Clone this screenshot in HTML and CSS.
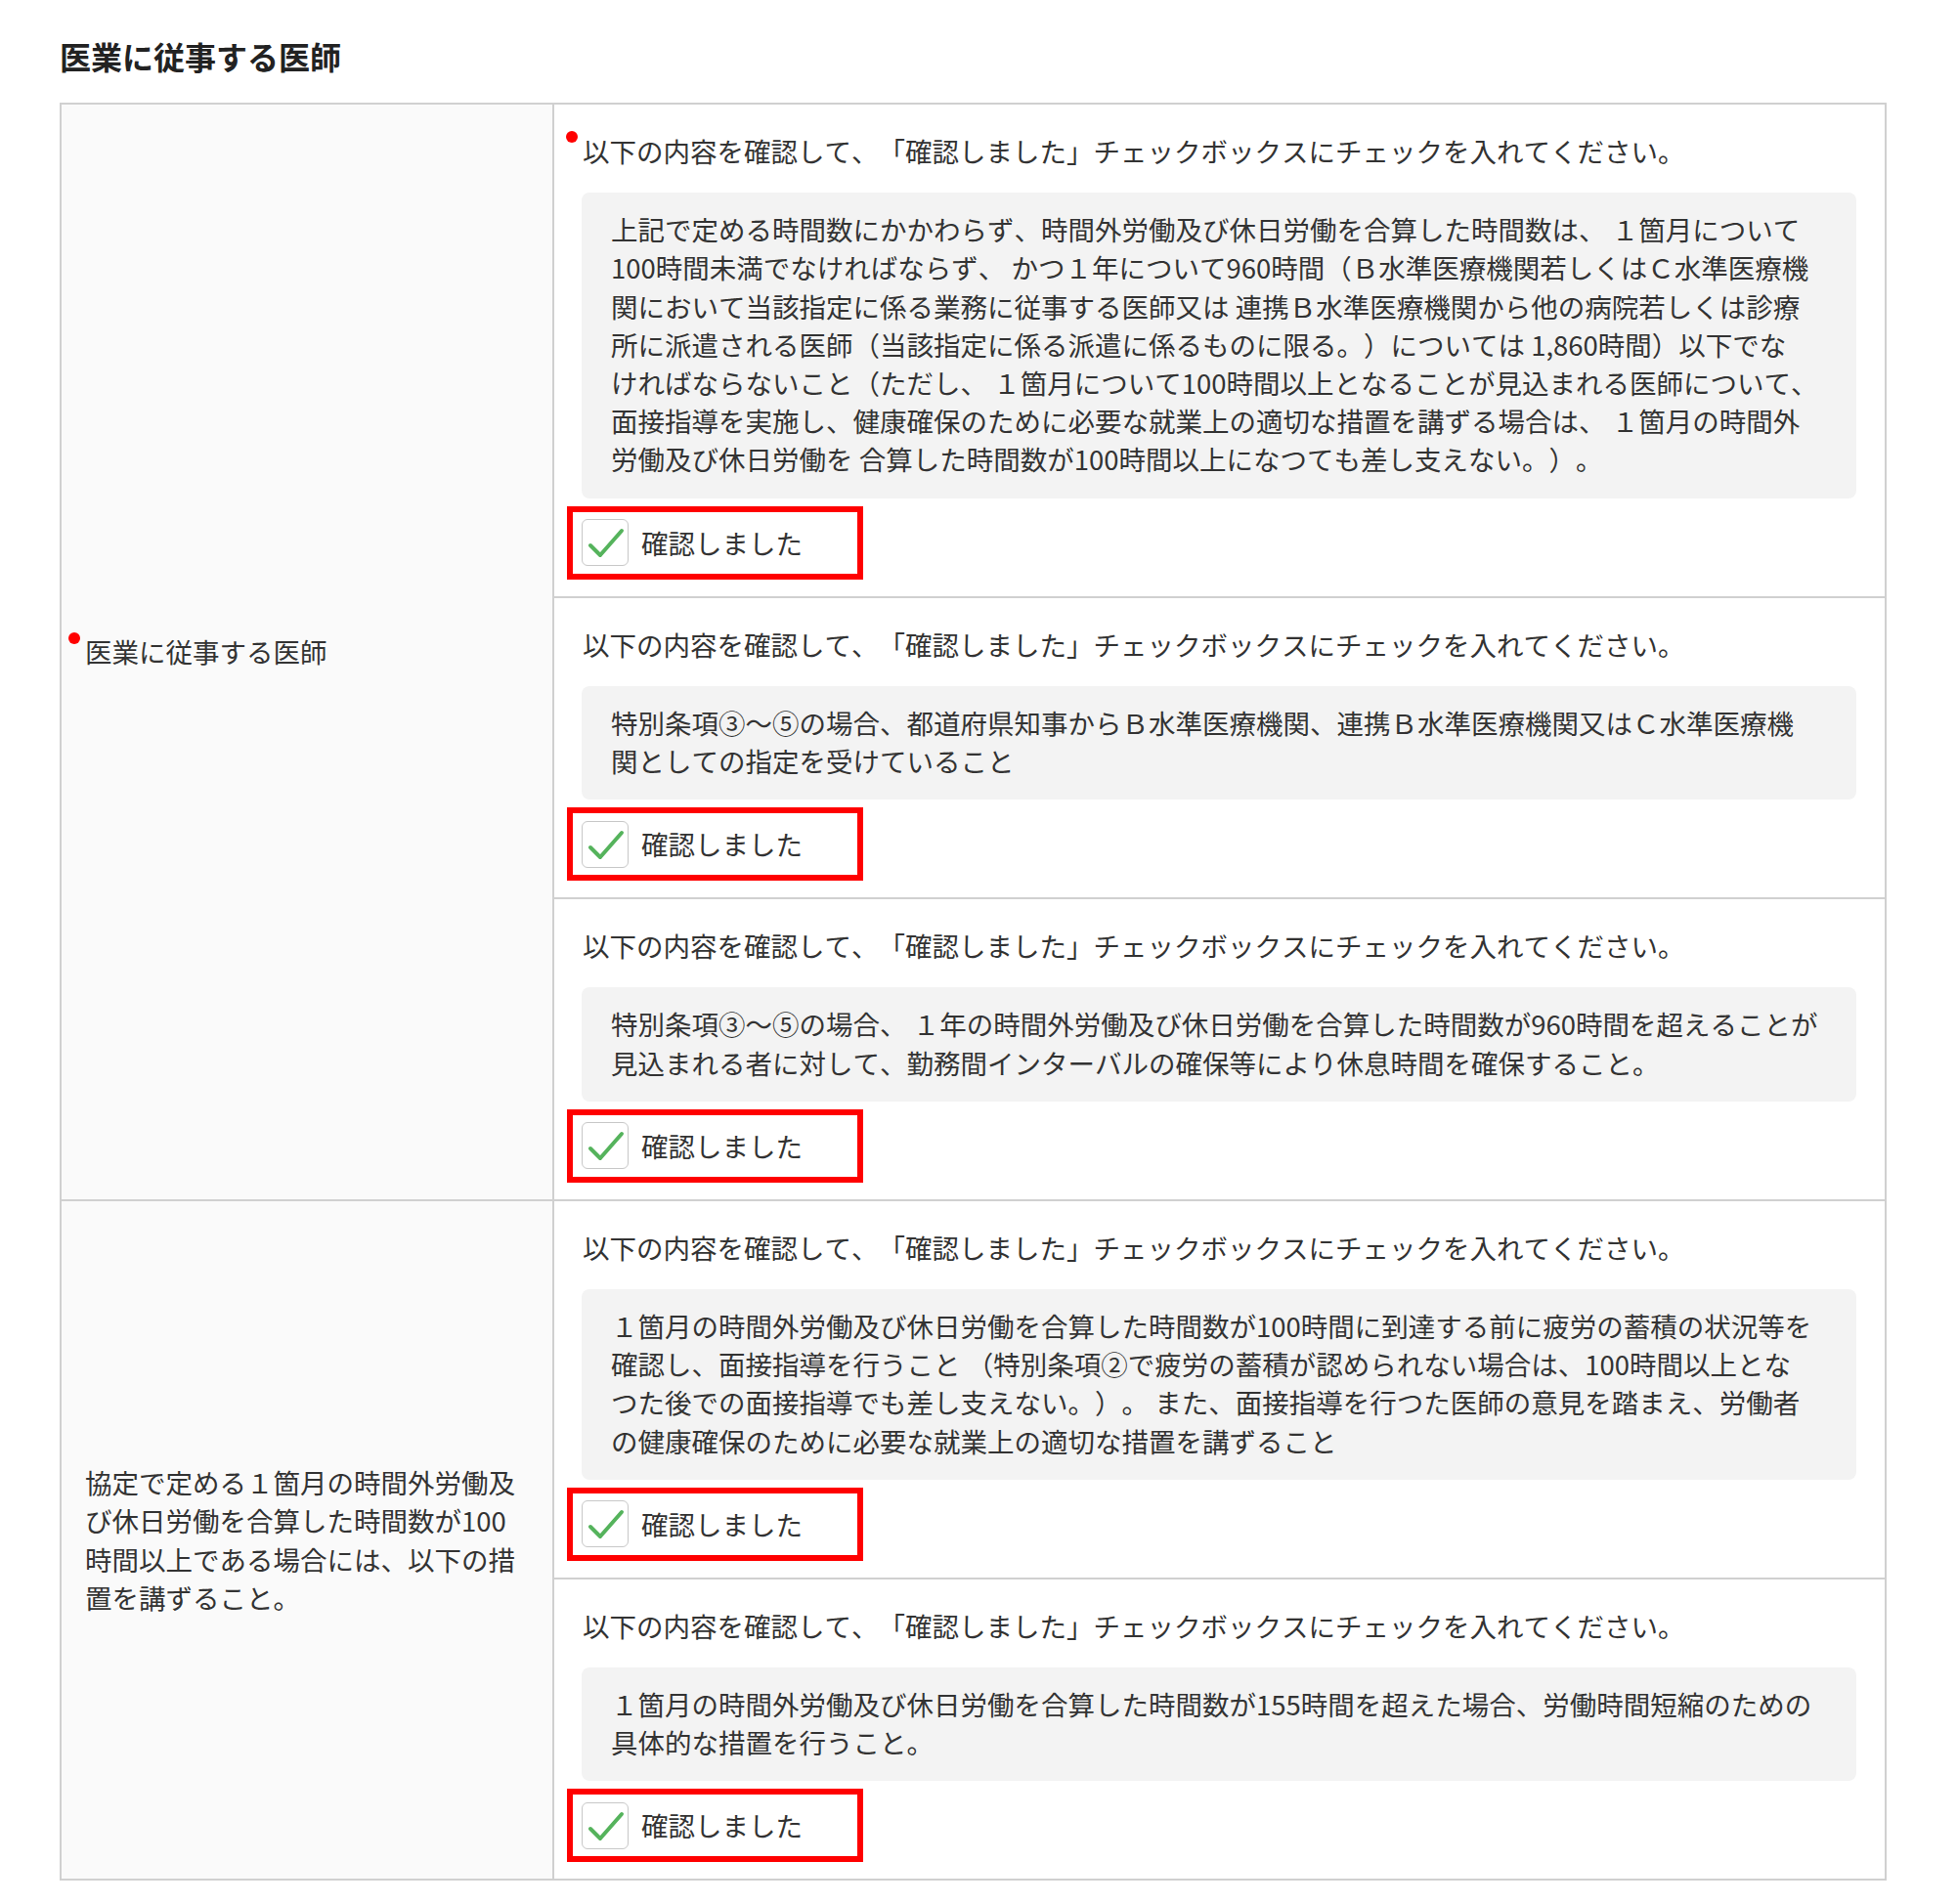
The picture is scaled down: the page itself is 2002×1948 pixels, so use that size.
FILE: index.html
```html
<!DOCTYPE html>
<html lang="ja">
<head>
<meta charset="utf-8">
<title>医業に従事する医師</title>
<link rel="stylesheet" href="styles.css">
</head>
<body>
<div class="page">
  <h2 class="title">医業に従事する医師</h2>
  <div class="table">
    <div class="row">
      <div class="label"><span class="req">医業に従事する医師</span></div>
      <div class="items">
        <div class="item">
          <p class="instr"><span class="req">以下の内容を確認して、「確認しました」チェックボックスにチェックを入れてください。</span></p>
          <div class="note">上記で定める時間数にかかわらず、時間外労働及び休日労働を合算した時間数は、 １箇月について<br>100時間未満でなければならず、 かつ１年について960時間（Ｂ水準医療機関若しくはＣ水準医療機<br>関において当該指定に係る業務に従事する医師又は 連携Ｂ水準医療機関から他の病院若しくは診療<br>所に派遣される医師（当該指定に係る派遣に係るものに限る。）については 1,860時間）以下でな<br>ければならないこと（ただし、 １箇月について100時間以上となることが見込まれる医師について、<br>面接指導を実施し、健康確保のために必要な就業上の適切な措置を講ずる場合は、 １箇月の時間外<br>労働及び休日労働を 合算した時間数が100時間以上になつても差し支えない。）。</div>
          <div class="frame"><span class="cbox"><svg viewBox="0 0 48 48" width="48" height="48"><polyline points="9,27 19,37 41,12" /></svg></span><span class="cb-label">確認しました</span></div>
        </div>
        <div class="item">
          <p class="instr">以下の内容を確認して、「確認しました」チェックボックスにチェックを入れてください。</p>
          <div class="note">特別条項③～⑤の場合、都道府県知事からＢ水準医療機関、連携Ｂ水準医療機関又はＣ水準医療機<br>関としての指定を受けていること</div>
          <div class="frame"><span class="cbox"><svg viewBox="0 0 48 48" width="48" height="48"><polyline points="9,27 19,37 41,12" /></svg></span><span class="cb-label">確認しました</span></div>
        </div>
        <div class="item">
          <p class="instr">以下の内容を確認して、「確認しました」チェックボックスにチェックを入れてください。</p>
          <div class="note">特別条項③～⑤の場合、 １年の時間外労働及び休日労働を合算した時間数が960時間を超えることが<br>見込まれる者に対して、勤務間インターバルの確保等により休息時間を確保すること。</div>
          <div class="frame"><span class="cbox"><svg viewBox="0 0 48 48" width="48" height="48"><polyline points="9,27 19,37 41,12" /></svg></span><span class="cb-label">確認しました</span></div>
        </div>
      </div>
    </div>
    <div class="row">
      <div class="label"><span>協定で定める１箇月の時間外労働及び休日労働を合算した時間数が100時間以上である場合には、以下の措置を講ずること。</span></div>
      <div class="items">
        <div class="item">
          <p class="instr">以下の内容を確認して、「確認しました」チェックボックスにチェックを入れてください。</p>
          <div class="note">１箇月の時間外労働及び休日労働を合算した時間数が100時間に到達する前に疲労の蓄積の状況等を<br>確認し、面接指導を行うこと （特別条項②で疲労の蓄積が認められない場合は、100時間以上とな<br>つた後での面接指導でも差し支えない。）。 また、面接指導を行つた医師の意見を踏まえ、労働者<br>の健康確保のために必要な就業上の適切な措置を講ずること</div>
          <div class="frame"><span class="cbox"><svg viewBox="0 0 48 48" width="48" height="48"><polyline points="9,27 19,37 41,12" /></svg></span><span class="cb-label">確認しました</span></div>
        </div>
        <div class="item">
          <p class="instr">以下の内容を確認して、「確認しました」チェックボックスにチェックを入れてください。</p>
          <div class="note">１箇月の時間外労働及び休日労働を合算した時間数が155時間を超えた場合、労働時間短縮のための<br>具体的な措置を行うこと。</div>
          <div class="frame"><span class="cbox"><svg viewBox="0 0 48 48" width="48" height="48"><polyline points="9,27 19,37 41,12" /></svg></span><span class="cb-label">確認しました</span></div>
        </div>
      </div>
    </div>
  </div>
</div>
</body>
</html>
```

FILE: styles.css
```css
html, body {
  margin: 0;
  padding: 0;
  background: #ffffff;
}

body {
  font-family: "Noto Sans CJK JP", "Noto Sans", sans-serif;
  color: #333333;
  font-size: 27.5px;
  line-height: 39.2px;
  font-kerning: none;
  font-feature-settings: "kern" 0;
  text-spacing-trim: space-all;
}

.page {
  padding-left: 61px;
  width: 1869px;
}

.title {
  margin: 35px 0 26px 0;
  font-size: 32px;
  line-height: 44px;
  font-weight: 700;
  color: #222222;
}

.table {
  width: 1869px;
  box-sizing: border-box;
  border: 2px solid #d0d0d0;
}

.row {
  display: flex;
}

.row + .row {
  border-top: 2px solid #d0d0d0;
}

.label {
  flex: none;
  width: 504px;
  box-sizing: border-box;
  background: #fafafa;
  border-right: 2px solid #d0d0d0;
  padding: 0 31px 0 24px;
  display: flex;
  align-items: center;
}

.req {
  position: relative;
}

.req::before {
  content: "";
  position: absolute;
  left: -17px;
  top: 0;
  width: 12px;
  height: 12px;
  border-radius: 50%;
  background: #ff0000;
}

.items {
  flex: 1;
  min-width: 0;
}

.item {
  padding: 28px 29px 17px 28px;
}

.item + .item {
  border-top: 2px solid #d0d0d0;
}

.instr {
  margin: 0 0 23px 1px;
}

.note {
  background: #f3f3f3;
  border-radius: 8px;
  padding: 18px 20px 20px 30px;
  white-space: nowrap;
}

.frame {
  margin: 8px 0 0 -15px;
  width: 303px;
  height: 75px;
  box-sizing: border-box;
  border: 6px solid #ff0000;
  padding: 0 0 0 9px;
  display: flex;
  align-items: center;
}

.cbox {
  width: 48px;
  height: 48px;
  box-sizing: border-box;
  border: 1.5px solid #c8c8c8;
  border-radius: 6px;
  background: #ffffff;
  display: flex;
  align-items: center;
  justify-content: center;
  flex: none;
}

.cbox svg {
  display: block;
  width: 48px;
  height: 48px;
  flex: none;
}

.cbox polyline {
  fill: none;
  stroke: #55b35c;
  stroke-width: 4;
  stroke-linecap: round;
  stroke-linejoin: round;
}

.cb-label {
  margin-left: 13px;
  color: #333333;
}
```
